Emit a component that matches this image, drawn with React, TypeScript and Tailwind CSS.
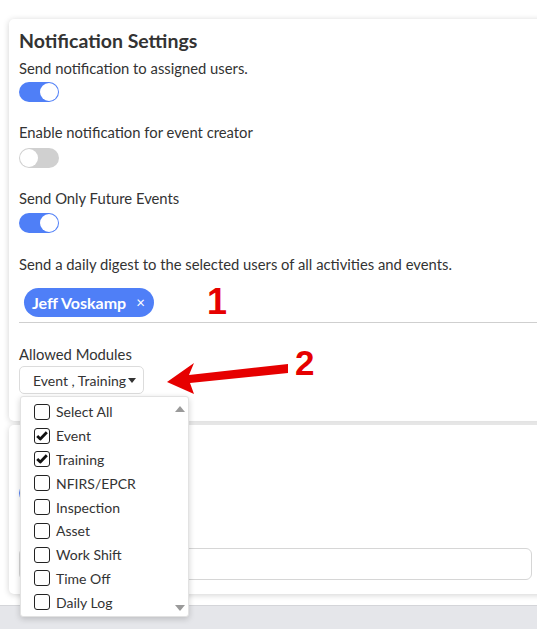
import React from 'react';

const modules = [
  { label: 'Select All', checked: false },
  { label: 'Event', checked: true },
  { label: 'Training', checked: true },
  { label: 'NFIRS/EPCR', checked: false },
  { label: 'Inspection', checked: false },
  { label: 'Asset', checked: false },
  { label: 'Work Shift', checked: false },
  { label: 'Time Off', checked: false },
  { label: 'Daily Log', checked: false },
];

function Toggle({ on }: { on: boolean }) {
  return (
    <div
      className={`w-[40px] h-[20px] rounded-full flex items-center px-[1px] ${
        on ? 'bg-[#4f7ff7] justify-end' : 'bg-[#d0d0d0] justify-start'
      }`}
    >
      <div className="w-[18px] h-[18px] rounded-full bg-white" />
    </div>
  );
}

export default function App() {
  return (
    <div className="relative w-[537px] h-[629px] overflow-hidden bg-white font-['Lato','Open_Sans',sans-serif] text-[#333]">
      <div className="flex flex-col h-full">
        {/* Notification settings card */}
        <div className="mt-[19px] ml-[9px] w-[540px] h-[402px] rounded-l-[5px] bg-white shadow-[0_1px_6px_rgba(0,0,0,0.18)] px-[10px] pt-[10px]">
          <h2 className="text-[19.5px] leading-[24px] font-bold text-[#333]">Notification Settings</h2>
          <p className="mt-[4px] text-[14.8px] leading-[22px]">Send notification to assigned users.</p>
          <div className="mt-[3px]">
            <Toggle on />
          </div>
          <p className="mt-[19px] text-[14.8px] leading-[22px]">Enable notification for event creator</p>
          <div className="mt-[5px]">
            <Toggle on={false} />
          </div>
          <p className="mt-[19px] text-[14.8px] leading-[22px]">Send Only Future Events</p>
          <div className="mt-[4px]">
            <Toggle on />
          </div>
          <p className="mt-[20px] text-[14.8px] leading-[22px]">Send a daily digest to the selected users of all activities and events.</p>
          <div className="mt-[13px] ml-[5px] flex items-center">
            <div className="h-[29px] rounded-full bg-[#4f7ff7] pl-[8px] pr-[9px] flex items-center gap-[10px] text-white">
              <span className="text-[16px] font-bold">Jeff Voskamp</span>
              <span className="text-[15px] leading-none">×</span>
            </div>
          </div>
          <div className="mt-[5px] h-px bg-[#cfcfcf]" />
          <p className="mt-[20px] text-[14.8px] leading-[22px]">Allowed Modules</p>
          <div className="mt-[1px] w-[125px] h-[28px] rounded-[5px] border border-[#dcdcdc] flex items-center pl-[13px] text-[14px] text-[#333]">
            <span>Event , Training</span>
            <span className="ml-[2px] w-0 h-0 border-l-[4.5px] border-r-[4.5px] border-t-[5px] border-l-transparent border-r-transparent border-t-[#333]" />
          </div>
        </div>

        {/* Second card (mostly covered) */}
        <div className="mt-[4px] ml-[9px] w-[540px] h-[169px] rounded-l-[5px] bg-white shadow-[0_1px_6px_rgba(0,0,0,0.18)] px-[10px] pt-[58px]">
          <Toggle on />
          <div className="mt-[45px] w-[513px] h-[32px] rounded-[6px] border border-[#d6d6d6]" />
        </div>

        <div className="mt-auto h-[24px] bg-[#e5e6ea] border-t border-[#d4d5d9]" />
      </div>

      {/* Dropdown menu */}
      <div className="absolute left-[20px] top-[396px] w-[169px] h-[221px] rounded-[3px] bg-white border border-[#e2e2e2] shadow-[0_2px_6px_rgba(0,0,0,0.18)] pt-[3px]">
        {modules.map((m) => (
          <div key={m.label} className="h-[23.8px] flex items-center pl-[13px] gap-[6px]">
            <div className="w-[16px] h-[16px] rounded-[3px] border border-[#222] flex items-center justify-center">
              {m.checked && (
                <svg width="12" height="12" viewBox="0 0 12 12">
                  <path d="M1.2 6 L4.3 9 L10.8 2.2" fill="none" stroke="#111" strokeWidth="2.8" strokeLinejoin="round" />
                </svg>
              )}
            </div>
            <span className="text-[14px] text-[#333]">{m.label}</span>
          </div>
        ))}
        <span className="absolute right-[3px] top-[9px] w-0 h-0 border-l-[5px] border-r-[5px] border-b-[6px] border-l-transparent border-r-transparent border-b-[#9a9a9a]" />
        <span className="absolute right-[3px] bottom-[5px] w-0 h-0 border-l-[5px] border-r-[5px] border-t-[6px] border-l-transparent border-r-transparent border-t-[#9a9a9a]" />
      </div>

      {/* Annotations */}
      <span className="absolute left-[207px] top-[282px] text-[36px] leading-[40px] font-bold text-[#e60000] font-['Liberation_Sans',Arial,sans-serif]">1</span>
      <span className="absolute left-[295px] top-[344px] text-[35px] leading-[38px] font-bold text-[#e60000] font-['Liberation_Sans',Arial,sans-serif]">2</span>
      <svg className="absolute left-0 top-0" width="537" height="629" viewBox="0 0 537 629">
        <polygon points="167,382 194,363 189,375 288,364 288,373 190,383 194,394" fill="#e60000" />
      </svg>
    </div>
  );
}
